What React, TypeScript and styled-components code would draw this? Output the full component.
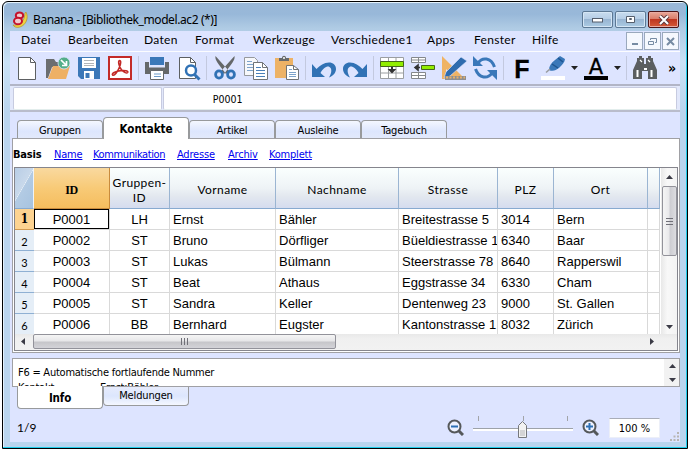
import React from "react";
import styled, { createGlobalStyle } from "styled-components";

const Global = createGlobalStyle`
  * { box-sizing: border-box; }
  body { margin: 0; background: #fff; overflow: hidden; }
`;

const UI = `"Noto Sans", "Open Sans", sans-serif`;
const MENU = `Lato, "Noto Sans", sans-serif`;
const TAHOMA = `"DejaVu Sans Condensed", "DejaVu Sans", sans-serif`;

const Page = styled.div`
  width: 691px;
  height: 451px;
  padding: 1px 3px 2px 2px;
  background: #fff;
`;
const Window = styled.div`
  width: 686px;
  height: 448px;
  border: 1px solid #000;
  border-radius: 6px 6px 0 0;
  padding: 0 6px 6px 7px;
  background: linear-gradient(#9ab8d8 0, #98b8d9 12px, #afcbe4 26px, #c9e2f6 60px, #bad5ee 110px, #bad5ee 100%);
  box-shadow: inset -1px -1px 0 #20cdea, inset 1px 1px 0 #e4f2fc;
`;
const TitleBar = styled.div`
  height: 29px;
  display: flex;
  align-items: flex-start;
  padding-left: 2px;
`;
const Logo = styled.svg`
  width: 17px;
  height: 17px;
  margin-top: 9px;
  flex: none;
`;
const Title = styled.div`
  font: 12px/17px ${UI};
  letter-spacing: -0.4px;
  margin: 9px auto 0 4px;
  white-space: nowrap;
`;
const WinButton = styled.div<{ $close?: boolean }>`
  width: 31px;
  height: 17px;
  margin: 9px 2px 0 0;
  border: 1px solid ${(p) => (p.$close ? "#4b1518" : "#5c7894")};
  border-radius: 2px;
  display: flex;
  align-items: center;
  justify-content: center;
  background: ${(p) =>
    p.$close
      ? "linear-gradient(#e8a898 0, #d97a68 48%, #be3620 50%, #d55a38 100%)"
      : "linear-gradient(#c8dcee 0, #b5cde6 48%, #98b5d2 50%, #abcbe3 100%)"};
  box-shadow: inset 0 0 0 1px ${(p) => (p.$close ? "#e9aba3" : "#d5e6f5")};
`;
const Client = styled.div`
  width: 670px;
  height: 411px;
  background: #dde4ff;
  display: flex;
  flex-direction: column;
`;
const MenuBar = styled.div`
  height: 21px;
  flex: none;
  border-bottom: 1px solid #fbfcff;
  display: flex;
  padding-left: 11px;
`;
const MenuItem = styled.div<{ $w: number }>`
  width: ${(p) => p.$w}px;
  font: 12px/18px ${MENU};
  letter-spacing: 0.3px;
  white-space: nowrap;
`;
const MdiGroup = styled.div`
  margin: 1px 0 0 auto;
  padding-right: 1px;
  display: flex;
  gap: 1px;
`;
const MdiButton = styled.div`
  width: 17px;
  height: 18px;
  border: 1px solid #9aa9bd;
  background: #f5f8fe;
  display: flex;
  align-items: center;
  justify-content: center;
`;
const ToolBar = styled.div`
  height: 34px;
  flex: none;
  display: flex;
  padding: 4px 0 0 5px;
  border-bottom: 2px solid #b2b5c6;
`;
const Tool = styled.svg`
  width: 24px;
  height: 24px;
  margin-right: 7px;
  flex: none;
  overflow: visible;
`;
const ToolSep = styled.div`
  width: 1px;
  height: 24px;
  margin: 0 6px 0 -1px;
  background: #c3c9df;
  flex: none;
`;
const Drop = styled.svg`
  width: 7px;
  height: 4px;
  margin: 10px 6px 0 -1px;
  flex: none;
`;
const More = styled.div`
  font: bold 14px/24px ${TAHOMA};
  margin-left: 4px;
`;
const InputRow = styled.div`
  height: 26px;
  flex: none;
  padding: 1px 3px 1px 3px;
  display: flex;
  gap: 1px;
  border-bottom: 2px solid #b9bccb;
  background: #e2e8fb;
`;
const Field = styled.div<{ $w: number; $pad?: number }>`
  width: ${(p) => p.$w}px;
  height: 23px;
  border: 1px solid #c7cbe0;
  border-bottom-color: #e2edec;
  border-radius: 2px;
  background: #fff;
  font: 10.5px/23px ${TAHOMA};
  padding-left: ${(p) => p.$pad ?? 0}px;
`;
const Tabs = styled.div`
  height: 26px;
  flex: none;
  padding-left: 7px;
  display: flex;
  align-items: flex-end;
`;
const Tab = styled.div<{ $active?: boolean }>`
  width: 86px;
  height: ${(p) => (p.$active ? 22 : 18)}px;
  border: 1px solid #989a9c;
  border-bottom: 0;
  border-radius: 4px 4px 0 0;
  background: ${(p) => (p.$active ? "#fff" : "linear-gradient(#f4f7ff, #dde6fd 60%, #e2e9fb)")};
  margin-bottom: ${(p) => (p.$active ? -1 : 0)}px;
  position: relative;
  font: ${(p) => (p.$active ? "bold 11.5px/23px" : "11px/19px")} ${TAHOMA};
  letter-spacing: ${(p) => (p.$active ? 0 : -0.15)}px;
  text-align: center;
`;
const Pane = styled.div`
  margin: 0 0 0 2px;
  width: 668px;
  height: 215px;
  flex: none;
  border: 1px solid #a0a0a4;
  background: #fff;
  padding: 0 1px 1px 1px;
`;
const Links = styled.div`
  height: 28px;
  display: flex;
  font: 11px/31px ${TAHOMA};
  margin-left: -1px;
`;
const Link = styled.span<{ $w: number; $ls?: number; $on?: boolean }>`
  width: ${(p) => p.$w}px;
  letter-spacing: ${(p) => p.$ls ?? -0.2}px;
  color: ${(p) => (p.$on ? "#000" : "#0000f0")};
  font-weight: ${(p) => (p.$on ? "bold" : "normal")};
  text-decoration: ${(p) => (p.$on ? "none" : "underline")};
  white-space: nowrap;
`;
const TableFrame = styled.div`
  width: 664px;
  height: 184px;
  border: 1px solid #85858d;
  display: grid;
  grid-template-columns: 646px 16px;
  grid-template-rows: 166px 16px;
`;
const Grid = styled.div`
  width: 645px;
  height: 166px;
  overflow: hidden;
  display: grid;
  grid-template-columns: 19px 76px 60px 106px 123px 99px 56px 94px 12px;
  grid-template-rows: 41px repeat(6, 21px);
`;
const Head = styled.div<{ $sel?: boolean }>`
  display: flex;
  align-items: center;
  justify-content: center;
  text-align: center;
  border-right: 1px solid ${(p) => (p.$sel ? "#c98b3c" : "#9bb5d2")};
  border-bottom: 1px solid ${(p) => (p.$sel ? "#c98b3c" : "#88aad0")};
  background: ${(p) =>
    p.$sel
      ? "linear-gradient(#f9d99f, #f8ca77 50%, #f5bd5e)"
      : "linear-gradient(#fafffe, #eef3f6 50%, #e3e8ef 70%, #d5dcef)"};
  font: ${(p) => (p.$sel ? `bold 12px/14px "Liberation Serif", serif` : `12px/15px ${MENU}`)};
  letter-spacing: ${(p) => (p.$sel ? -0.3 : 0.4)}px;
  padding-top: 3px;
`;
const Corner = styled.div`
  background: linear-gradient(120deg, #b8cde5 0, #c9d9eb 45%, #e9f0f6 46%, #b3cbe4 48%, #a7c3df 100%);
  border-right: 1px solid #eef3f8;
  border-bottom: 1px solid #88aad0;
`;
const RowHead = styled.div<{ $sel?: boolean }>`
  border-bottom: 1px solid ${(p) => (p.$sel ? "#d29a51" : "#8fb0d3")};
  background: ${(p) => (p.$sel ? "#fdd391" : "#e5eef7")};
  font: ${(p) => (p.$sel ? `bold 12px/21px "DejaVu Serif Condensed", serif` : `11px/23px ${MENU}`)};
  text-align: center;
`;
const Cell = styled.div<{ $center?: boolean; $sel?: boolean }>`
  border-right: 1px solid #d9d9d9;
  border-bottom: 1px solid #d9d9d9;
  padding-left: ${(p) => (p.$center ? 0 : 3)}px;
  text-align: ${(p) => (p.$center ? "center" : "left")};
  font: 13px/21px "Liberation Sans", Arial, sans-serif;
  letter-spacing: 0.02px;
  white-space: nowrap;
  overflow: hidden;
  box-shadow: ${(p) => (p.$sel ? "inset 0 0 0 1px #000" : "none")};
`;
const VScroll = styled.div`
  height: 166px;
  background: linear-gradient(90deg, #e8e8e8, #f8f8f8 40%, #f3f3f3);
  display: flex;
  flex-direction: column;
  align-items: center;
`;
const VThumb = styled.div`
  width: 15px;
  height: 70px;
  border: 1px solid #92929a;
  border-radius: 2px;
  background: linear-gradient(90deg, #f5f5f5, #e9e9eb 45%, #cdcdd2 55%, #dcdce0);
  display: flex;
  align-items: center;
  justify-content: center;
`;
const ScrollArrow = styled.svg<{ $h: number }>`
  width: 16px;
  height: ${(p) => p.$h}px;
  flex: none;
`;
const HScroll = styled.div`
  grid-column: 1 / 3;
  height: 16px;
  background: linear-gradient(#e9e9e9, #f0f0f0 30%, #f2f2f2);
  display: flex;
  align-items: flex-start;
`;
const HThumb = styled.div`
  width: 303px;
  height: 15px;
  margin-right: auto;
  border: 1px solid #92929a;
  border-radius: 2px;
  background: linear-gradient(#f5f5f5, #e7e7e9 45%, #c6c6ca 55%, #d3d3d8);
  display: flex;
  align-items: center;
  justify-content: center;
`;
const InfoBox = styled.div`
  margin: 5px 0 0 2px;
  width: 668px;
  height: 29px;
  border: 1px solid #a0a0a4;
  background: #fff;
  display: flex;
  flex: none;
`;
const InfoText = styled.div`
  width: 651px;
  height: 27px;
  overflow: hidden;
  padding: 6px 0 0 5px;
  font: 11px/16px ${TAHOMA};
  letter-spacing: -0.24px;
  white-space: nowrap;
`;
const InfoLine = styled.div`
  display: flex;
  height: 15px;
`;
const InfoKey = styled.span`
  width: 82px;
`;
const InfoScroll = styled.div`
  width: 15px;
  display: flex;
  flex-direction: column;
  background: #f2f2f2;
`;
const BottomTabs = styled.div`
  height: 23px;
  flex: none;
  padding-left: 7px;
  display: flex;
  align-items: flex-start;
`;
const BottomTab = styled.div<{ $active?: boolean }>`
  position: relative;
  width: 86px;
  height: ${(p) => (p.$active ? 23 : 19)}px;
  margin-top: ${(p) => (p.$active ? -1 : 0)}px;
  border: 1px solid #989a9c;
  border-top: 0;
  border-radius: 0 0 4px 4px;
  background: ${(p) => (p.$active ? "#fff" : "linear-gradient(#e7ecfc, #dce6fd 50%, #f4f7ff)")};
  font: ${(p) => (p.$active ? "bold 11.5px/24px" : "11px/18px")} ${TAHOMA};
  letter-spacing: -0.15px;
  text-align: center;
`;
const Status = styled.div`
  height: 32px;
  flex: none;
  display: flex;
  padding-left: 7px;
`;
const Position = styled.div`
  width: 430px;
  font: 12px/35px ${MENU};
`;
const Magnifier = styled.svg`
  width: 17px;
  height: 17px;
  margin-top: 9px;
`;
const Slider = styled.svg`
  width: 100px;
  height: 24px;
  margin: 6px 9px 0;
`;
const Percent = styled.div`
  width: 51px;
  height: 20px;
  margin: 8px 0 0 10px;
  border: 1px solid #eceff8;
  border-top-color: #a9adb8;
  background: #fff;
  font: 11px/20px ${TAHOMA};
  letter-spacing: 0;
  text-align: center;
`;
const Grip = styled.svg`
  width: 9px;
  height: 9px;
  margin: 22px 0 0 10px;
`;

const BLUE = "#3172b5";
const GRAY = "#5d6062";

const menu: [string, number][] = [
  ["Datei", 47],
  ["Bearbeiten", 76],
  ["Daten", 51],
  ["Format", 58],
  ["Werkzeuge", 78],
  ["Verschiedene1", 96],
  ["Apps", 47],
  ["Fenster", 58],
  ["Hilfe", 40],
];

const rows = [
  ["P0001", "LH", "Ernst", "Bähler", "Breitestrasse 5", "3014", "Bern"],
  ["P0002", "ST", "Bruno", "Dörfliger", "Büeldiestrasse 1", "6340", "Baar"],
  ["P0003", "ST", "Lukas", "Bülmann", "Steerstrasse 78", "8640", "Rapperswil"],
  ["P0004", "ST", "Beat", "Athaus", "Eggstrasse 34", "6330", "Cham"],
  ["P0005", "ST", "Sandra", "Keller", "Dentenweg 23", "9000", "St. Gallen"],
  ["P0006", "BB", "Bernhard", "Eugster", "Kantonstrasse 1", "8032", "Zürich"],
];

const NewDoc = () => (
  <Tool viewBox="0 0 24 24">
    <path d="M3.5 1.5h12l5 5v17h-17z" fill="#fff" stroke={GRAY} />
    <path d="M15.5 1.5v5h5" fill="none" stroke={GRAY} />
  </Tool>
);
const Open = () => (
  <Tool viewBox="0 0 24 24">
    <path d="M0 3h8l2 3h9v5H6L2 22H0z" fill="#6b6e70" />
    <path d="M7 10h17l-4 13H2z" fill="#eeb065" />
    <circle cx="18" cy="7" r="6" fill="#54ae88" stroke="#dde4ff" strokeWidth=".8" />
    <path d="M15 4l5 5M20.5 5v4.5H16" fill="none" stroke="#fff" strokeWidth="1.7" />
  </Tool>
);
const Save = () => (
  <Tool viewBox="0 0 24 24">
    <path d="M1 1h22v22H4l-3-3z" fill="#3c78b8" />
    <path d="M5 2h14v10H5zM7 15h10v8H7z" fill="#fff" />
    <path d="M7 4.500h10M7 7.500h10M7 9.500h10" stroke="#b2b5b8" />
    <path d="M8.500 17h4v5h-4z" fill="#3c78b8" />
  </Tool>
);
const Pdf = () => (
  <Tool viewBox="0 0 24 24">
    <path d="M1 1h22v22H1z" fill="#fff" stroke="#c32a27" strokeWidth="2" />
    <path
      d="M11.500 4.500c1.800 0 1.300 3.500-.2 7C9.500 16 6.500 20 4.800 19.200c-2-1.500 3-4.200 8-4.600 4-.4 7.500.2 7 1.700-.7 1.700-4.200 0-6.300-2.500-2.500-3-3.800-9.300-2-9.300z"
      fill="none"
      stroke="#c32a27"
      strokeWidth="1.600"
    />
  </Tool>
);
const Printer = () => (
  <Tool viewBox="0 0 24 24">
    <path d="M0 6h4v5h16V6h4v12H0z" fill="#65686a" />
    <path d="M5 1h14v8H5z" fill="#3b78b8" />
    <path d="M4 11h16" stroke="#dfe6fa" />
    <path d="M5.500 14.500h13v9h-13z" fill="#fff" stroke="#65686a" />
    <path d="M9 18h7M9 20.500h7" stroke="#6e9cc9" />
  </Tool>
);
const Preview = () => (
  <Tool viewBox="0 0 24 24">
    <path d="M3.500 1.500h11l5 5v16h-16z" fill="#fff" stroke={GRAY} />
    <path d="M14.500 1.500v5h5" fill="none" stroke={GRAY} />
    <circle cx="15" cy="14.500" r="5" fill="#fff" stroke={BLUE} strokeWidth="2.500" />
    <path d="M18.500 18.500l5 5" stroke={BLUE} strokeWidth="3" />
  </Tool>
);
const Cut = () => (
  <Tool viewBox="0 0 24 24">
    <path d="M2.500 0C2 3 3 5 10 14l3 4 3-3zM21.500 0C22 3 21 5 14 14l-3 4-3-3z" fill="#65686a" />
    <ellipse cx="6" cy="18.500" rx="3.400" ry="3.600" fill="none" stroke={BLUE} strokeWidth="2.800" />
    <ellipse cx="18" cy="18.500" rx="3.400" ry="3.600" fill="none" stroke={BLUE} strokeWidth="2.800" />
  </Tool>
);
const Copy = () => (
  <Tool viewBox="0 0 24 24">
    <path d="M.5 1.500h10l3 3v15H.5z" fill="#f7f8fb" stroke="#96999d" />
    <path d="M3 5.500h5M3 8.500h7M3 11.500h7M3 14.500h7" stroke="#7da3cb" />
    <path d="M9.500 6.500h9l5 5v12h-14z" fill="#fff" stroke="#707376" />
    <path d="M18.500 6.500v5h5" fill="none" stroke="#707376" />
    <path d="M12 11.500h5M12 14.500h9M12 17.500h9M12 20.500h9" stroke="#4a80b9" />
  </Tool>
);
const Paste = () => (
  <Tool viewBox="0 0 24 24">
    <path d="M0 2h18v20H0z" fill="#edb266" />
    <path d="M4 5V2h3c0-3 4-3 4 0h3v3z" fill="#66696b" />
    <circle cx="9" cy="2" r="1" fill="#fff" />
    <path d="M11.500 9.500h7l5 4v10h-12z" fill="#fff" stroke="#707376" />
    <path d="M18.500 9.500v4h5" fill="none" stroke="#707376" />
    <path d="M14 13.500h3M14 16.500h7M14 18.500h7M14 20.500h7" stroke="#7da3cb" />
  </Tool>
);
const Undo = ({ flip }: { flip?: boolean }) => (
  <Tool viewBox="0 0 24 24">
    <g transform={flip ? "translate(24 0) scale(-1 1)" : undefined}>
      <path d="M0 8v13h13l-4.500-4C11 12.500 15 9.500 17.500 11c2.500 1.500 2.500 5.500-.5 10.500 5-2 7-5.500 7-8.500 0-4-3-6.500-7-6.500-5 0-9 3-12.500 6.500z" fill={BLUE} />
    </g>
  </Tool>
);
const InsertTable = () => (
  <Tool viewBox="0 0 24 24">
    <path d="M.5 1.500h23v21H.5zM8.500 1.500v21M16 1.500v21M.5 17h23" fill="#fff" stroke="#9b9ea1" />
    <path d="M.5 5.500h23v5H.5z" fill="#91ed00" stroke="#46661c" />
    <path d="M12 11v5M10 14l2 2 2-2z" stroke="#333" strokeWidth="2" fill="#333" />
  </Tool>
);
const InsertRow = () => (
  <Tool viewBox="0 0 24 24">
    <path d="M.5 1.500h14v5H.5zM.5 4h14M7.500 1.500v5M.5 16.500h14v6H.5zM.5 19.500h14M7.500 16.500v6" fill="#fff" stroke="#85888b" />
    <path d="M10.500 9.500h13v4h-13z" fill="#91ed00" stroke="#46661c" />
    <path d="M9 11.500H5M7 9l-3 2.500L7 14z" stroke="#333" strokeWidth="1.600" fill="#333" />
  </Tool>
);
const Design = () => (
  <Tool viewBox="0 0 24 24">
    <path d="M0 0l23 23H0z" fill="#efb365" />
    <path d="M4 13l6 6H4z" fill="#dde4ff" />
    <path d="M2 22l2-6L19 1l6 4L8 20z" fill="#2f6cae" stroke="#dde4ff" strokeWidth=".6" />
    <path d="M3 20h21v4H3z" fill="#8e8f91" />
    <path d="M4 21.500h19" stroke="#e8b16b" strokeWidth="2" strokeDasharray="2 1.500" />
  </Tool>
);
const Refresh = () => (
  <Tool viewBox="0 0 24 24">
    <path d="M5 7C9 1 18 1 21.500 11M19 17C15 23 6 23 2.500 13" fill="none" stroke="#3a78b9" strokeWidth="3" />
    <path d="M0 0v10h10zM24 24V14H14z" fill="#3a78b9" />
  </Tool>
);
const Glyph = ({ t, bar }: { t: string; bar?: boolean }) => (
  <Tool viewBox="0 0 24 24">
    <text
      x="12"
      y={bar ? 17.500 : 21.500}
      textAnchor="middle"
      fontFamily={bar ? '"DejaVu Sans", sans-serif' : '"Liberation Sans", sans-serif'}
      fontWeight={bar ? "normal" : "bold"}
      fontSize={bar ? 21 : 25}
      stroke="#000"
      strokeWidth=".3"
    >
      {t}
    </text>
    {bar && <path d="M0 20h24v4H0z" />}
  </Tool>
);
const Pen = () => (
  <Tool viewBox="0 0 24 24">
    <path d="M0 20h24v4H0z" fill="#fff" />
    <path d="M8 14c0-4 2-7 6-10l5-4 5 3c0 3-3 6-6 9-3 2-6 4-10 2z" fill="#3a78b9" />
    <path d="M17 2l5 4M11 8l6 4" stroke="#1f5590" strokeWidth="1.500" />
    <path d="M9 13l-4 3.500" stroke="#9a9da1" strokeWidth="1.600" />
  </Tool>
);
const Binoculars = () => (
  <Tool viewBox="0 0 24 24">
    <path d="M4 5V2h2V0h3v2h2v6h2V2h2V0h3v2h2v3l4 9v9h-9v-8h-6v8H0v-9z" fill="#5b5e60" />
    <path d="M4.500 14v7M18.500 14v7M11 13h3" stroke="#fff" strokeWidth="2" />
    <path d="M7 4l2 2M15 4l2 2" stroke="#fff" strokeWidth="1.200" />
  </Tool>
);
const DropArrow = () => (
  <Drop viewBox="0 0 7 4">
    <path d="M0 0h7L3.500 4z" fill="#222" />
  </Drop>
);
const Arrow = ({ d, h }: { d: string; h: number }) => (
  <ScrollArrow $h={h} viewBox={`0 0 16 ${h}`}>
    <path d={d} fill="#3b3b46" />
  </ScrollArrow>
);
const ThumbLines = ({ turn }: { turn?: boolean }) => (
  <svg width="9" height="9" viewBox="0 0 9 9">
    <path d={turn ? "M1 1.500h7M1 4.500h7M1 7.500h7" : "M1.500 1v7M4.500 1v7M7.500 1v7"} stroke="#707078" />
  </svg>
);
const Lens = ({ plus }: { plus?: boolean }) => (
  <Magnifier viewBox="0 0 17 17">
    <path d="M11 11l5 5" stroke="#55585a" strokeWidth="3" />
    <circle cx="7.500" cy="7.500" r="6" fill="#eef2ff" stroke="#55585a" strokeWidth="2" />
    <path d={plus ? "M4 7.500h7M7.500 4v7" : "M4 7.500h7"} stroke="#2d70b5" strokeWidth="2" />
  </Magnifier>
);

export default function App() {
  return (
    <Page>
      <Global />
      <Window>
        <TitleBar>
          <Logo viewBox="0 0 17 17">
            <path d="M14 1c3 6 0 13-6 15-3 1-6 0-7-2 6 1 12-4 12-12z" fill="#eed23e" stroke="#b5912e" strokeWidth=".7" />
            <ellipse cx="7.500" cy="4.500" rx="3.700" ry="3" fill="#f2c9cc" stroke="#c4122b" strokeWidth="2" />
            <ellipse cx="6" cy="10" rx="4" ry="3.300" fill="#f2c9cc" stroke="#c4122b" strokeWidth="2" />
          </Logo>
          <Title>Banana - [Bibliothek_model.ac2 (*)]</Title>
          <WinButton>
            <svg width="12" height="6"><rect x=".5" y="1.500" width="10" height="3.500" fill="#fff" stroke="#555e6c" /></svg>
          </WinButton>
          <WinButton>
            <svg width="11" height="9"><path d="M1.500 1.500h8v6h-8z" fill="#fff" stroke="#555e6c" /><path d="M4.500 3.500h2v1h-2z" fill="#fff" stroke="#555e6c" /></svg>
          </WinButton>
          <WinButton $close>
            <svg width="12" height="10"><path d="M2 1l8 8M10 1L2 9" stroke="#5b3a40" strokeWidth="4" /><path d="M2 1l8 8M10 1L2 9" stroke="#fff" strokeWidth="2" /></svg>
          </WinButton>
        </TitleBar>
        <Client>
          <MenuBar>
            {menu.map(([t, w]) => (
              <MenuItem key={t} $w={w}>{t}</MenuItem>
            ))}
            <MdiGroup>
              <MdiButton><svg width="9" height="9"><path d="M2 7h6" stroke="#768ba3" strokeWidth="2" /></svg></MdiButton>
              <MdiButton><svg width="9" height="9"><path d="M2.500 3V1.500h6v4H7M.5 4.500h5v3h-5z" fill="none" stroke="#768ba3" /></svg></MdiButton>
              <MdiButton><svg width="9" height="9"><path d="M1 1l7 7M8 1L1 8" stroke="#768ba3" strokeWidth="2" /></svg></MdiButton>
            </MdiGroup>
          </MenuBar>
          <ToolBar>
            <NewDoc /><Open /><Save /><Pdf />
            <ToolSep />
            <Printer /><Preview />
            <ToolSep />
            <Cut /><Copy /><Paste />
            <ToolSep />
            <Undo /><Undo flip />
            <ToolSep />
            <InsertTable /><InsertRow /><Design /><Refresh />
            <ToolSep />
            <Glyph t="F" /><Pen /><DropArrow /><Glyph t="A" bar /><DropArrow />
            <ToolSep />
            <Binoculars />
            <More>»</More>
          </ToolBar>
          <InputRow>
            <Field $w={149} />
            <Field $w={515} $pad={49}>P0001</Field>
          </InputRow>
          <Tabs>
            <Tab>Gruppen</Tab>
            <Tab $active>Kontakte</Tab>
            <Tab>Artikel</Tab>
            <Tab>Ausleihe</Tab>
            <Tab>Tagebuch</Tab>
          </Tabs>
          <Pane>
            <Links>
              <Link $w={41} $on>Basis</Link>
              <Link $w={39}>Name</Link>
              <Link $w={84} $ls={-0.38}>Kommunikation</Link>
              <Link $w={51}>Adresse</Link>
              <Link $w={41}>Archiv</Link>
              <Link $w={60}>Komplett</Link>
            </Links>
            <TableFrame>
              <Grid>
                <Corner />
                <Head $sel>ID</Head>
                <Head>Gruppen-<br />ID</Head>
                <Head>Vorname</Head>
                <Head>Nachname</Head>
                <Head>Strasse</Head>
                <Head>PLZ</Head>
                <Head>Ort</Head>
                <Head />
                {rows.map((r, i) => (
                  <React.Fragment key={r[0]}>
                    <RowHead $sel={i === 0}>{i + 1}</RowHead>
                    {r.map((c, j) => (
                      <Cell key={j} $center={j < 2} $sel={i === 0 && j === 0}>{c}</Cell>
                    ))}
                    <Cell />
                  </React.Fragment>
                ))}
              </Grid>
              <VScroll>
                <Arrow h={18} d="M5 11h7L8.500 7z" />
                <VThumb><ThumbLines turn /></VThumb>
                <Arrow h={78} d="M5 69h7l-3.500 4z" />
              </VScroll>
              <HScroll>
                <ScrollArrow $h={15} viewBox="0 0 16 15"><path d="M10 4v7L6 7.500z" fill="#3b3b46" /></ScrollArrow>
                <svg width="2" height="15" />
                <HThumb><ThumbLines /></HThumb>
                <ScrollArrow $h={15} viewBox="0 0 16 15"><path d="M5 4v7l4-3.500z" fill="#3b3b46" /></ScrollArrow>
                <svg width="16" height="15" />
              </HScroll>
            </TableFrame>
          </Pane>
          <InfoBox>
            <InfoText>
              <InfoLine>F6 = Automatische fortlaufende Nummer</InfoLine>
              <InfoLine><InfoKey>Kontakt</InfoKey>Ernst;Bähler</InfoLine>
            </InfoText>
            <InfoScroll>
              <Arrow h={13} d="M5 9h7L8.500 5z" />
              <Arrow h={14} d="M5 6h7l-3.500 4z" />
            </InfoScroll>
          </InfoBox>
          <BottomTabs>
            <BottomTab $active>Info</BottomTab>
            <BottomTab>Meldungen</BottomTab>
          </BottomTabs>
          <Status>
            <Position>1/9</Position>
            <Lens />
            <Slider viewBox="0 0 100 24">
              <path d="M5.500 0v5M50.500 0v5M94.500 0v5" stroke="#a2a4a8" />
              <path d="M0 12.500h100" stroke="#9da2a9" />
              <path d="M0 14h100" stroke="#fff" strokeWidth="2" />
              <path d="M45.500 21.500v-12l4-4 4 4v12z" fill="#f2f2f2" stroke="#76787c" />
              <path d="M47 14h5v6h-5z" fill="#d4d4d6" />
            </Slider>
            <Lens plus />
            <Percent>100 %</Percent>
            <Grip viewBox="0 0 9 9">
              <path d="M7 0h2v2H7zM3.500 3.500h2v2h-2zM7 3.500h2v2H7zM0 7h2v2H0zM3.500 7h2v2h-2zM7 7h2v2H7z" fill="#b7b5b2" />
            </Grip>
          </Status>
        </Client>
      </Window>
    </Page>
  );
}
